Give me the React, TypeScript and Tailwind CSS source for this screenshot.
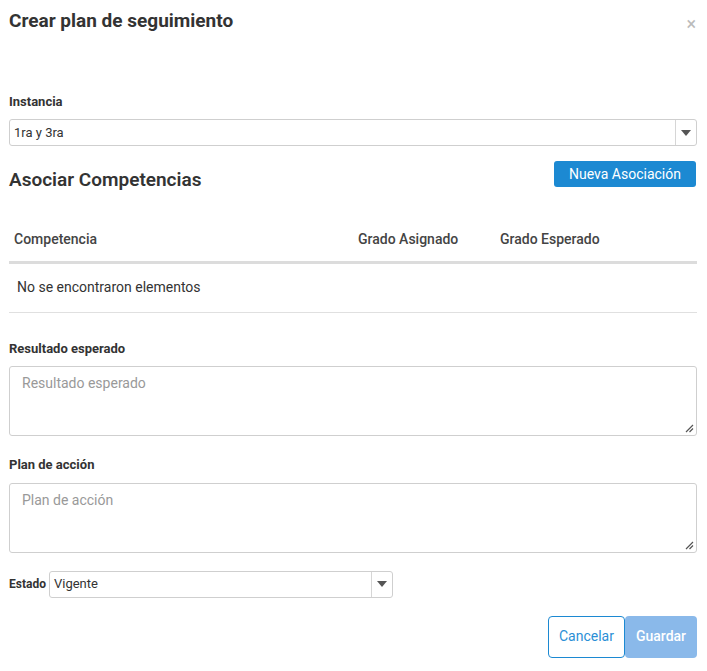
import React from 'react';

const Caret: React.FC = () => (
  <svg width="10" height="6" viewBox="0 0 10 6">
    <path d="M0 0 L10 0 L5 6 Z" fill="#555" />
  </svg>
);

const SelectBox: React.FC<{ value: string; className?: string }> = ({ value, className }) => (
  <div className={`flex h-[27px] items-stretch rounded-[3px] border border-[#cfcfcf] bg-white ${className ?? ''}`}>
    <div className="flex flex-1 items-center pl-[4px] text-[13px] text-[#333]">{value}</div>
    <div className="flex w-[21px] items-center justify-center border-l border-[#d6d6d6]">
      <Caret />
    </div>
  </div>
);

const Label: React.FC<{ children: React.ReactNode }> = ({ children }) => (
  <div className="text-[13px] font-bold text-[#333]">{children}</div>
);

const TextArea: React.FC<{ placeholder: string }> = ({ placeholder }) => (
  <div className="relative h-[70px] rounded-[3px] border border-[#cfcfcf] bg-white px-3 pt-[4px]">
    <span className="text-[14px] text-[#999]">{placeholder}</span>
    <svg className="absolute bottom-[2px] right-[2px]" width="10" height="10" viewBox="0 0 10 10">
      <path d="M9 2 L2 9 M9 5.5 L5.5 9" stroke="#555" strokeWidth="1.2" />
    </svg>
  </div>
);

export default function App() {
  return (
    <div className="min-h-[671px] w-[707px] bg-white font-['Roboto',sans-serif] text-[#333]">
      <div className="flex items-start justify-between pl-[9px] pr-[11px] pt-[7px]">
        <h1 className="text-[19px] font-bold text-[#333]">Crear plan de seguimiento</h1>
        <span className="mt-[8px] text-[18px] leading-none text-[#bbb]">×</span>
      </div>

      <div className="px-[9px] pr-[10px]">
        <div className="mt-[56px]">
          <Label>Instancia</Label>
          <SelectBox value="1ra y 3ra" className="mt-[8px]" />
        </div>

        <div className="mt-[15px] flex items-start justify-between">
          <h2 className="mt-[5px] text-[19px] font-semibold text-[#333]">Asociar Competencias</h2>
          <button className="mr-[1px] h-[26px] w-[142px] rounded-[3px] bg-[#1c89d2] text-[14px] text-white">
            Nueva Asociación
          </button>
        </div>

        <div className="mt-[33px] flex h-[24px] items-center text-[14px] font-medium text-[#444]">
          <div className="w-[349px] pl-[5px]">Competencia</div>
          <div className="w-[142px]">Grado Asignado</div>
          <div>Grado Esperado</div>
        </div>
        <div className="mt-[9px] h-[3px] bg-[#dcdcdc]" />
        <div className="flex h-[48px] items-center pl-[8px] text-[14px] text-[#333]">No se encontraron elementos</div>
        <div className="h-px bg-[#e0e0e0]" />

        <div className="mt-[26px]">
          <Label>Resultado esperado</Label>
          <div className="mt-[8px]">
            <TextArea placeholder="Resultado esperado" />
          </div>
        </div>

        <div className="mt-[19px]">
          <Label>Plan de acción</Label>
          <div className="mt-[8px]">
            <TextArea placeholder="Plan de acción" />
          </div>
        </div>

        <div className="mt-[18px] flex items-center">
          <div className="text-[12px] font-bold text-[#333]">Estado</div>
          <SelectBox value="Vigente" className="ml-[3px] w-[344px]" />
        </div>

        <div className="mt-[18px] flex justify-end">
          <button className="h-[42px] w-[77px] rounded-[4px] border border-[#1c89d2] bg-white text-[14px] text-[#2b8fd6]">
            Cancelar
          </button>
          <button className="h-[42px] w-[72px] rounded-[4px] bg-[#8ab9ea] text-[14px] font-medium text-white">
            Guardar
          </button>
        </div>
      </div>
    </div>
  );
}
